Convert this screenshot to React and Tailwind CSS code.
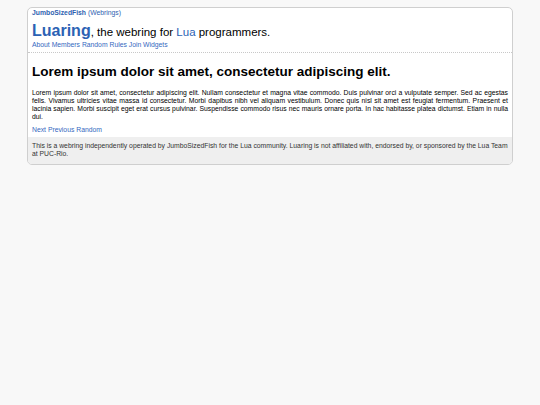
import React from 'react';

const links = ['About', 'Members', 'Random', 'Rules', 'Join', 'Widgets'];
const ringLinks = ['Next', 'Previous', 'Random'];

const App = () => {
  return (
    <div className="min-h-[405px] bg-[#f8f8f8] pt-[7px] font-['Liberation_Sans',Arial,sans-serif] text-black">
      <div className="mx-auto w-[486px] overflow-hidden rounded-[5px] border border-[#cfcfcf] bg-white">
        <header className="border-b border-dotted border-[#c8c8c8] px-[4px] pt-[1px] pb-[3px]">
          <div className="text-[6.8px] leading-[8px] text-[#2f5fb0]">
            <a href="#" className="font-bold">JumboSizedFish</a> <a href="#">(Webrings)</a>
          </div>
          <div className="mt-[5px] text-[11.5px] leading-[18px]">
            <a href="#" className="text-[16px] font-bold text-[#2c62b4]">Luaring</a>, the webring for{' '}
            <a href="#" className="text-[#2c62b4]">Lua</a> programmers.
          </div>
          <nav className="text-[6.8px] leading-[8px] text-[#3568c0]">
            {links.map((l, i) => (
              <React.Fragment key={l}>
                {i > 0 && ' '}
                <a href="#">{l}</a>
              </React.Fragment>
            ))}
          </nav>
        </header>

        <main className="px-[4px] pt-[11px]">
          <h1 className="text-[13.5px] font-bold leading-[16px]">
            Lorem ipsum dolor sit amet, consectetur adipiscing elit.
          </h1>
          <p className="mt-[9px] text-justify text-[6.8px] leading-[8px]">
            Lorem ipsum dolor sit amet, consectetur adipiscing elit. Nullam consectetur et magna vitae commodo. Duis pulvinar orci a vulputate semper. Sed ac egestas felis. Vivamus ultricies vitae massa id consectetur. Morbi dapibus nibh vel aliquam vestibulum. Donec quis nisl sit amet est feugiat fermentum. Praesent et lacinia sapien. Morbi suscipit eget erat cursus pulvinar. Suspendisse commodo risus nec mauris ornare porta. In hac habitasse platea dictumst. Etiam in nulla dui.
          </p>
          <div className="mt-[5px] mb-[3px] text-[6.8px] leading-[8px] text-[#3568c0]">
            {ringLinks.map((l, i) => (
              <React.Fragment key={l}>
                {i > 0 && ' '}
                <a href="#">{l}</a>
              </React.Fragment>
            ))}
          </div>
        </main>

        <footer className="bg-[#efefef] px-[4px] pt-[5px] pb-[6px] text-[6.8px] leading-[8px] text-[#333]">
          This is a webring independently operated by JumboSizedFish for the Lua community. Luaring is not affiliated with, endorsed by, or sponsored by the Lua Team at PUC-Rio.
        </footer>
      </div>
    </div>
  );
};

export default App;
